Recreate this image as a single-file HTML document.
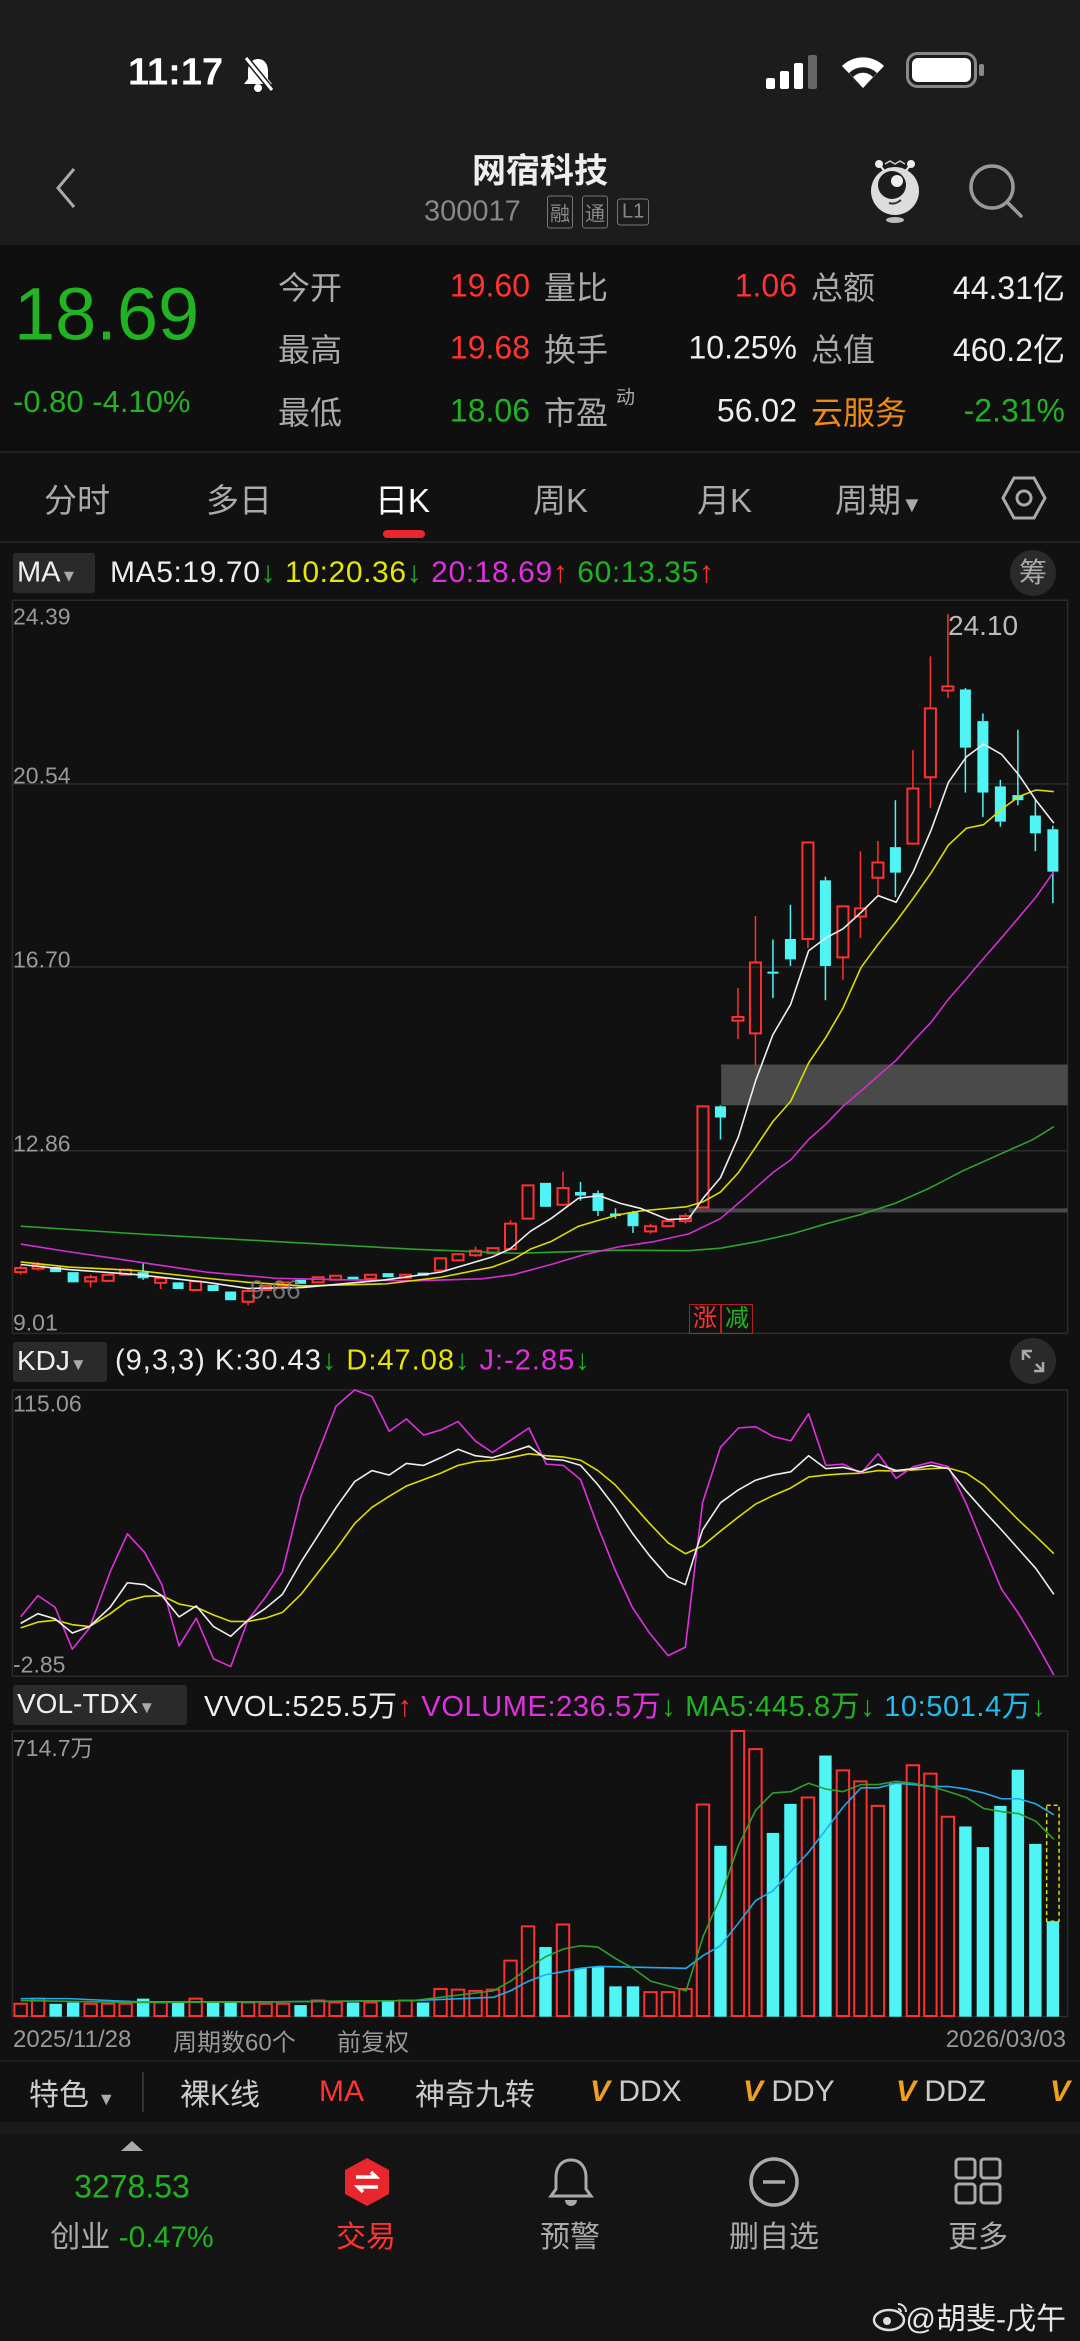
<!DOCTYPE html>
<html><head><meta charset="utf-8">
<style>
*{margin:0;padding:0;box-sizing:border-box}
body{width:1080px;height:2341px;background:#111;position:relative;overflow:hidden;font-family:"Liberation Sans","Noto Sans CJK SC",sans-serif;color:#ddd}
.a{position:absolute;white-space:nowrap}
.m{transform:translateY(-50%)}
.r{color:#ff3333}.g{color:#22b322}.y{color:#e6e600}.p{color:#e030e0}.gr{color:#aaa}.w{color:#eee}.c{color:#22bbee}
svg{position:absolute}
</style></head><body>
<div class="a" style="left:0;top:0;width:1080px;height:245px;background:#1c1c1c"></div>
<div class="a" style="left:0;top:245px;width:1080px;height:207px;background:#0f0f0f"></div>
<div class="a" style="left:0;top:451px;width:1080px;height:2px;background:#222"></div>
<div class="a" style="left:0;top:541px;width:1080px;height:2px;background:#222"></div>
<!-- status -->
<div class="a m" style="left:128px;top:73px;font-size:38px;font-weight:bold;color:#fff">11:17</div>
<svg style="left:240px;top:55px" width="36" height="38" viewBox="0 0 36 38"><path d="M18 4c-7 0-10 6-10 12v8l-4 5h28l-4-5v-8c0-6-3-12-10-12z" fill="#fff"/><circle cx="18" cy="33" r="4" fill="#fff"/><line x1="6" y1="3" x2="32" y2="35" stroke="#1c1c1c" stroke-width="6"/><line x1="6" y1="3" x2="32" y2="35" stroke="#fff" stroke-width="3"/></svg>
<svg style="left:766px;top:55px" width="56" height="34"><rect x="0" y="23" width="9" height="11" rx="2" fill="#fff"/><rect x="14" y="16" width="9" height="18" rx="2" fill="#fff"/><rect x="28" y="8" width="9" height="26" rx="2" fill="#fff"/><rect x="42" y="0" width="9" height="34" rx="2" fill="#666"/></svg>
<svg style="left:838px;top:52px" width="50" height="38" viewBox="0 0 50 38"><path d="M25 36L4 14a30 30 0 0 1 42 0z" fill="#fff"/><path d="M25 36L11 21a20 20 0 0 1 28 0z" fill="#1c1c1c"/><path d="M25 36L15 25a14 14 0 0 1 20 0z" fill="#fff"/></svg>
<svg style="left:906px;top:52px" width="80" height="36"><rect x="1.5" y="1.5" width="68" height="33" rx="10" fill="none" stroke="#888" stroke-width="3"/><rect x="6" y="6" width="59" height="24" rx="6" fill="#fff"/><rect x="73" y="12" width="5" height="12" rx="2" fill="#888"/></svg>
<!-- header -->
<svg style="left:50px;top:165px" width="30" height="46"><path d="M24 4L8 23l16 19" fill="none" stroke="#aaa" stroke-width="3"/></svg>
<div class="a m" style="left:0;width:1080px;text-align:center;top:168px;font-size:34px;font-weight:bold;color:#eee">网宿科技</div>
<div class="a m" style="left:424px;top:212px;font-size:29px;color:#888">300017</div>
<div class="a m" style="left:547px;top:212px;font-size:20px;color:#888;border:1.5px solid #777;padding:1px 2px;border-radius:3px">融</div>
<div class="a m" style="left:582px;top:212px;font-size:20px;color:#888;border:1.5px solid #777;padding:1px 2px;border-radius:3px">通</div>
<div class="a m" style="left:617px;top:212px;font-size:20px;color:#888;border:1.5px solid #777;padding:1px 4px;border-radius:3px">L1</div>
<svg style="left:865px;top:158px" width="60" height="66" viewBox="0 0 60 66"><path d="M20 6l5 -3 5 3 5-3 5 3" fill="none" stroke="#ccc" stroke-width="1.5"/><circle cx="14" cy="6" r="4" fill="#eee"/><circle cx="46" cy="6" r="4" fill="#eee"/><line x1="14" y1="6" x2="20" y2="14" stroke="#eee" stroke-width="2"/><line x1="46" y1="6" x2="40" y2="14" stroke="#eee" stroke-width="2"/><circle cx="30" cy="33" r="24" fill="#ddd"/><circle cx="27" cy="27" r="14" fill="#1c1c1c"/><circle cx="32" cy="23" r="6" fill="#eee"/><path d="M24 45q6 2 12-3" fill="none" stroke="#333" stroke-width="2"/><ellipse cx="30" cy="62" rx="9" ry="3" fill="#bbb"/></svg>
<svg style="left:965px;top:160px" width="64" height="60"><circle cx="27" cy="27" r="21" fill="none" stroke="#999" stroke-width="3.5"/><line x1="42" y1="42" x2="56" y2="56" stroke="#999" stroke-width="3.5" stroke-linecap="round"/></svg>
<!-- quote -->
<div class="a m g" style="left:14px;top:314px;font-size:74px">18.69</div>
<div class="a m g" style="left:13px;top:402px;font-size:31px">-0.80 -4.10%</div>
<div class="a m gr" style="left:278px;top:286px;font-size:32px">今开</div>
<div class="a m gr" style="left:278px;top:348px;font-size:32px">最高</div>
<div class="a m gr" style="left:278px;top:411px;font-size:32px">最低</div>
<div class="a m r" style="right:550px;top:286px;font-size:32px">19.60</div>
<div class="a m r" style="right:550px;top:348px;font-size:32px">19.68</div>
<div class="a m g" style="right:550px;top:411px;font-size:32px">18.06</div>
<div class="a m gr" style="left:544px;top:286px;font-size:32px">量比</div>
<div class="a m gr" style="left:544px;top:348px;font-size:32px">换手</div>
<div class="a m gr" style="left:544px;top:411px;font-size:32px">市盈</div>
<div class="a m gr" style="left:616px;top:396px;font-size:19px">动</div>
<div class="a m r" style="right:283px;top:286px;font-size:32px">1.06</div>
<div class="a m w" style="right:283px;top:348px;font-size:32px">10.25%</div>
<div class="a m w" style="right:283px;top:411px;font-size:32px">56.02</div>
<div class="a m gr" style="left:811px;top:286px;font-size:32px">总额</div>
<div class="a m gr" style="left:811px;top:348px;font-size:32px">总值</div>
<div class="a m" style="left:811px;top:411px;font-size:32px;color:#f08a10">云服务</div>
<div class="a m w" style="right:15px;top:286px;font-size:32px">44.31亿</div>
<div class="a m w" style="right:15px;top:348px;font-size:32px">460.2亿</div>
<div class="a m g" style="right:15px;top:411px;font-size:32px">-2.31%</div>
<!-- tabs -->
<div class="a m gr" style="left:44px;top:498px;font-size:33px">分时</div>
<div class="a m gr" style="left:206px;top:498px;font-size:33px">多日</div>
<div class="a m" style="left:375px;top:498px;font-size:33px;color:#fff">日K</div>
<div class="a m gr" style="left:533px;top:498px;font-size:33px">周K</div>
<div class="a m gr" style="left:697px;top:498px;font-size:33px">月K</div>
<div class="a m gr" style="left:835px;top:498px;font-size:33px">周期<span style="font-size:22px">▼</span></div>
<svg style="left:1000px;top:474px" width="48" height="48"><path d="M14 4h20l11 20-11 20H14L3 24z" fill="none" stroke="#aaa" stroke-width="3"/><circle cx="24" cy="24" r="7" fill="none" stroke="#aaa" stroke-width="3"/></svg>
<div class="a" style="left:383px;top:530px;width:42px;height:8px;border-radius:4px;background:#e8262e"></div>
<!-- MA legend -->
<div class="a" style="left:13px;top:553px;width:82px;height:40px;background:#2a2a2a;border-radius:3px"></div>
<div class="a m w" style="left:17px;top:573px;font-size:29px">MA<span style="font-size:17px;color:#aaa">▼</span></div>
<div class="a m" style="left:110px;top:573px;font-size:30px;letter-spacing:0.6px"><span class="w">MA5:19.70</span><span class="g">↓</span> <span class="y">10:20.36</span><span class="g">↓</span> <span class="p">20:18.69</span><span class="r">↑</span> <span class="g">60:13.35</span><span class="r">↑</span></div>
<div class="a" style="left:1010px;top:550px;width:46px;height:46px;border-radius:50%;background:#2a2a2a;color:#aaa;font-size:28px;text-align:center;line-height:46px">筹</div>
<!-- main chart -->
<svg id="main" style="left:0;top:540px" width="1080" height="800" viewBox="0 0 1568 1568" preserveAspectRatio="none"></svg>
<div class="a m" style="left:13px;top:617px;font-size:23px;color:#999">24.39</div>
<div class="a m" style="left:13px;top:776px;font-size:23px;color:#999">20.54</div>
<div class="a m" style="left:13px;top:960px;font-size:23px;color:#999">16.70</div>
<div class="a m" style="left:13px;top:1144px;font-size:23px;color:#999">12.86</div>
<div class="a m" style="left:13px;top:1323px;font-size:23px;color:#999">9.01</div>
<div class="a m" style="left:948px;top:626px;font-size:28px;color:#bbb">24.10</div>
<div class="a m" style="left:250px;top:1290px;font-size:26px;color:#888;opacity:.8">9.66</div>
<div class="a" style="left:689px;top:1304px;width:32px;height:30px;border:1px solid #b02020;color:#ff3333;font-size:24px;text-align:center;line-height:28px">涨</div>
<div class="a" style="left:721px;top:1304px;width:32px;height:30px;border:1px solid #b02020;color:#22b322;font-size:24px;text-align:center;line-height:28px">减</div>
<!-- KDJ -->
<div class="a" style="left:13px;top:1342px;width:94px;height:40px;background:#2a2a2a;border-radius:3px"></div>
<div class="a m w" style="left:17px;top:1361px;font-size:28px">KDJ<span style="font-size:17px;color:#aaa">▼</span></div>
<div class="a m" style="left:115px;top:1361px;font-size:29px;letter-spacing:1px"><span class="w">(9,3,3) K:30.43</span><span class="g">↓</span> <span class="y">D:47.08</span><span class="g">↓</span> <span class="p">J:-2.85</span><span class="g">↓</span></div>
<div class="a" style="left:1010px;top:1338px;width:46px;height:46px;border-radius:50%;background:#2a2a2a"></div>
<svg style="left:1020px;top:1348px" width="26" height="26"><path d="M3 12V3h9M3 3l7 7M23 14v9h-9M23 23l-7-7" fill="none" stroke="#aaa" stroke-width="2.5"/></svg>
<svg id="kv" style="left:0;top:1330px" width="1080" height="1011" viewBox="0 0 1568 1568" preserveAspectRatio="none"></svg>
<div class="a m" style="left:13px;top:1404px;font-size:23px;color:#999">115.06</div>
<div class="a m" style="left:13px;top:1665px;font-size:23px;color:#999">-2.85</div>
<!-- VOL -->
<div class="a" style="left:13px;top:1685px;width:174px;height:40px;background:#2a2a2a;border-radius:3px"></div>
<div class="a m w" style="left:17px;top:1704px;font-size:28px">VOL-TDX<span style="font-size:17px;color:#aaa">▼</span></div>
<div class="a m" style="left:204px;top:1704px;font-size:29px;letter-spacing:0.6px"><span class="w">VVOL:525.5万</span><span class="r">↑</span> <span class="p">VOLUME:236.5万</span><span class="g">↓</span> <span class="g">MA5:445.8万</span><span class="g">↓</span> <span class="c">10:501.4万</span><span class="g">↓</span></div>
<div class="a m" style="left:13px;top:1746px;font-size:23px;color:#999">714.7万</div>
<div class="a m" style="left:13px;top:2040px;font-size:24px;color:#999">2025/11/28</div>
<div class="a m" style="left:173px;top:2040px;font-size:24px;color:#999">周期数60个</div>
<div class="a m" style="left:337px;top:2040px;font-size:24px;color:#999">前复权</div>
<div class="a m" style="right:14px;top:2040px;font-size:24px;color:#999">2026/03/03</div>
<!-- feature bar -->
<div class="a" style="left:0;top:2060px;width:1080px;height:2px;background:#1d1d1d"></div>
<div class="a m" style="left:29px;top:2092px;font-size:30px;color:#ccc">特色 <span style="font-size:18px;color:#aaa">▼</span></div>
<div class="a" style="left:142px;top:2072px;width:2px;height:40px;background:#333"></div>
<div class="a m" style="left:180px;top:2092px;font-size:30px;color:#ccc">裸K线</div>
<div class="a m r" style="left:319px;top:2092px;font-size:30px">MA</div>
<div class="a m" style="left:415px;top:2092px;font-size:30px;color:#ccc">神奇九转</div>
<div class="a m" style="left:590px;top:2092px;font-size:30px;color:#ccc"><b style="color:#f0a020;font-style:italic">V</b> DDX</div>
<div class="a m" style="left:743px;top:2092px;font-size:30px;color:#ccc"><b style="color:#f0a020;font-style:italic">V</b> DDY</div>
<div class="a m" style="left:896px;top:2092px;font-size:30px;color:#ccc"><b style="color:#f0a020;font-style:italic">V</b> DDZ</div>
<div class="a m" style="left:1050px;top:2092px;font-size:30px"><b style="color:#f0a020;font-style:italic">V</b></div>
<div class="a" style="left:0;top:2122px;width:1080px;height:12px;background:#1a1a1a"></div>
<div class="a" style="left:0;top:2134px;width:1080px;height:207px;background:#141414"></div>
<!-- nav -->
<div class="a" style="left:121px;top:2141px;width:0;height:0;border-left:11px solid transparent;border-right:11px solid transparent;border-bottom:10px solid #aaa"></div>
<div class="a m g" style="left:0;width:264px;text-align:center;top:2187px;font-size:32px">3278.53</div>
<div class="a m" style="left:0;width:264px;text-align:center;top:2234px;font-size:30px;color:#aaa">创业 <span class="g">-0.47%</span></div>
<svg style="left:342px;top:2156px" width="50" height="52"><path d="M25 2l22 12v24L25 50 3 38V14z" fill="#e8262e"/><path d="M14 21h20l-5-5M36 31H16l5 5" fill="none" stroke="#fff" stroke-width="3.5"/></svg>
<div class="a m r" style="left:268px;width:196px;text-align:center;top:2234px;font-size:30px">交易</div>
<svg style="left:548px;top:2156px" width="46" height="52"><path d="M23 4c-10 0-15 8-15 17v12l-5 7h40l-5-7V21c0-9-5-17-15-17z" fill="none" stroke="#aaa" stroke-width="3"/><path d="M17 44a6 6 0 0 0 12 0" fill="#aaa"/></svg>
<div class="a m gr" style="left:472px;width:196px;text-align:center;top:2234px;font-size:30px">预警</div>
<svg style="left:748px;top:2156px" width="52" height="52"><circle cx="26" cy="26" r="23" fill="none" stroke="#aaa" stroke-width="3.5"/><line x1="15" y1="26" x2="37" y2="26" stroke="#aaa" stroke-width="3.5"/></svg>
<div class="a m gr" style="left:676px;width:196px;text-align:center;top:2234px;font-size:30px">删自选</div>
<svg style="left:953px;top:2156px" width="50" height="50"><rect x="3" y="3" width="19" height="19" rx="3" fill="none" stroke="#aaa" stroke-width="3"/><rect x="28" y="3" width="19" height="19" rx="3" fill="none" stroke="#aaa" stroke-width="3"/><rect x="3" y="28" width="19" height="19" rx="3" fill="none" stroke="#aaa" stroke-width="3"/><rect x="28" y="28" width="19" height="19" rx="3" fill="none" stroke="#aaa" stroke-width="3"/></svg>
<div class="a m gr" style="left:880px;width:196px;text-align:center;top:2234px;font-size:30px">更多</div>
<svg style="left:872px;top:2300px" width="38" height="32"><ellipse cx="17" cy="20" rx="15" ry="10" fill="none" stroke="#ddd" stroke-width="2.5"/><circle cx="15" cy="21" r="4" fill="#ddd"/><path d="M26 4a8 8 0 0 1 8 8M26 9a3 3 0 0 1 3 3" fill="none" stroke="#ddd" stroke-width="2"/></svg>
<div class="a m" style="right:14px;top:2316px;font-size:30px;color:#e8e8e8">@胡斐-戊午</div>
<script>
var NS="http://www.w3.org/2000/svg";
function el(s,t,a){var e=document.createElementNS(NS,t);for(var k in a)e.setAttribute(k,a[k]);e.setAttribute("vector-effect","non-scaling-stroke");s.appendChild(e);return e}
var M=document.getElementById("main"),K=document.getElementById("kv");
[118,478,837,1197,1555].forEach(function(y){el(M,"line",{x1:18,x2:1550,y1:y,y2:y,stroke:"#2c2c2c","stroke-width":1.5})});
el(M,"line",{x1:18,x2:18,y1:118,y2:1555,stroke:"#2c2c2c","stroke-width":1.5});
el(M,"line",{x1:1550,x2:1550,y1:118,y2:1555,stroke:"#2c2c2c","stroke-width":1.5});
el(M,"rect",{x:1047,y:1028,width:503,height:80,fill:"#4a4a4a"});
el(M,"rect",{x:1000,y:1310,width:550,height:8,fill:"#4a4a4a"});
var C=[["r",1427,1435,1422,1440],["r",1420,1428,1415,1432],["c",1425,1435],["c",1435,1455],["r",1445,1453,1440,1465],["r",1440,1452],["r",1430,1440],["c",1435,1447,1418,1450],["r",1447,1456,1445,1468],["c",1455,1468],["r",1453,1470],["c",1460,1472],["c",1473,1490],["r",1472,1493,1465,1500],["r",1462,1470],["r",1455,1462],["c",1450,1458],["r",1445,1455],["r",1442,1450],["c",1444,1450],["r",1440,1448],["c",1437,1445],["r",1440,1446],["c",1436,1442],["r",1408,1432],["r",1400,1412],["r",1393,1402,1385,1405],["r",1388,1398],["r",1340,1390,1333,1392],["r",1265,1330],["c",1260,1307],["r",1270,1303,1238,1305],["c",1278,1285,1258,1295],["c",1280,1315,1275,1325],["c",1320,1325,1310,1330],["c",1318,1345,1315,1358],["r",1345,1355,1340,1360],["r",1335,1345],["r",1325,1335,1320,1340],["r",1110,1308],["c",1110,1132,1108,1175],["r",935,942,878,978],["r",828,967,737,1030],["c",846,850,783,898],["c",782,822,715,835],["r",593,782,593,800],["c",667,835,660,902],["r",718,818,718,862],["r",722,738,610,780],["r",632,662,590,695],["c",602,652,510,700],["r",487,595,412,597],["r",330,465,228,525],["r",287,295,145,310],["c",293,407,290,495],["c",355,495,340,543],["c",483,552,470,562],["c",500,510,372,520],["c",540,575,508,610],["c",567,650,560,712]];
var RED="#ff3030",CY="#4ff5f5";
C.forEach(function(d,i){var x=30+25.4*i,col=d[0]=="r"?RED:CY;var t=d[1],b=d[2],h=d[3]||t,l=d[4]||b;
el(M,"line",{x1:x,x2:x,y1:h,y2:t,stroke:col,"stroke-width":1.5});el(M,"line",{x1:x,x2:x,y1:b,y2:l,stroke:col,"stroke-width":1.5});
if(d[0]=="r")el(M,"rect",{x:x-8,y:t,width:16,height:Math.max(b-t,3),fill:"none",stroke:col,"stroke-width":2});else el(M,"rect",{x:x-8,y:t,width:16,height:Math.max(b-t,4),fill:col});});
function pl(s,pts,col,w){el(s,"polyline",{points:pts,fill:"none",stroke:col,"stroke-width":w||1.6,"stroke-linejoin":"round"})}
pl(M,"30,1345 200,1360 400,1375 600,1390 750,1398 900,1392 1000,1393 1046,1388 1100,1375 1150,1360 1200,1340 1250,1322 1300,1300 1350,1270 1400,1235 1450,1205 1500,1175 1530,1150","#2ea02e");
pl(M,"30,1380 100,1395 200,1415 300,1435 400,1447 500,1450 600,1452 700,1448 745,1440 800,1420 850,1400 900,1385 950,1375 1000,1360 1046,1330 1072,1300 1097,1270 1122,1240 1148,1215 1174,1175 1199,1145 1224,1110 1250,1080 1275,1050 1301,1020 1326,982 1352,945 1377,900 1403,860 1428,820 1454,780 1479,740 1504,700 1530,650","#d030d0");
pl(M,"30,1415 100,1425 200,1432 300,1447 360,1455 440,1462 560,1458 640,1445 715,1425 745,1410 770,1390 800,1375 840,1345 870,1333 900,1322 930,1315 970,1310 996,1307 1021,1297 1046,1278 1072,1240 1097,1190 1122,1140 1148,1100 1174,1025 1199,975 1224,917 1250,838 1275,792 1301,748 1326,702 1352,652 1377,598 1403,565 1428,558 1454,528 1479,503 1504,490 1530,493","#dddd00");
pl(M,"30,1420 100,1430 200,1440 300,1455 360,1467 440,1465 560,1450 640,1435 715,1405 740,1390 770,1355 800,1330 840,1290 870,1285 900,1300 930,1310 970,1332 1000,1330 1021,1290 1046,1250 1072,1170 1097,1060 1122,970 1148,910 1174,805 1199,780 1224,762 1250,730 1275,697 1301,710 1326,650 1352,568 1377,475 1403,425 1428,400 1454,420 1479,460 1504,510 1530,555","#eeeeee");
[93,537,622,1065].forEach(function(y){el(K,"line",{x1:18,x2:1550,y1:y,y2:y,stroke:"#2c2c2c","stroke-width":1.5})});
[[18,93,537],[1550,93,537],[18,622,1065],[1550,622,1065]].forEach(function(a){el(K,"line",{x1:a[0],x2:a[0],y1:a[1],y2:a[2],stroke:"#2c2c2c","stroke-width":1.5})});
pl(K,"30,462 55,453 80,450 105,457 130,460 160,440 185,420 210,413 235,412 260,425 285,430 310,442 335,452 360,452 385,447 410,438 437,410 488,340 515,300 540,275 565,258 590,242 615,232 640,222 665,210 690,204 715,202 740,198 768,192 793,195 818,197 843,202 868,218 893,240 918,270 943,300 970,330 995,347 1020,335 1046,312 1072,290 1097,270 1122,257 1148,245 1174,228 1199,225 1224,223 1250,222 1275,218 1301,219 1326,217 1352,215 1377,214 1403,222 1428,240 1454,268 1479,295 1504,320 1530,347","#dddd00");
pl(K,"30,445 55,412 80,430 105,495 130,462 160,375 185,316 210,345 235,395 260,490 285,447 310,510 335,522 360,450 385,415 410,375 437,258 488,118 515,93 540,103 565,157 590,138 615,163 640,155 665,142 690,172 715,190 740,172 768,152 793,208 818,210 843,232 868,305 893,372 918,430 943,470 970,505 995,492 1020,268 1046,182 1072,152 1097,150 1122,165 1148,172 1174,130 1199,210 1224,208 1250,222 1275,192 1301,230 1326,212 1352,205 1377,212 1403,270 1428,335 1454,402 1479,440 1504,485 1530,535","#e030e0");
pl(K,"30,455 55,440 80,448 105,470 130,460 160,430 185,392 210,395 235,412 260,445 285,428 310,460 335,475 360,450 385,432 410,410 437,360 488,275 515,235 540,218 565,225 590,207 615,210 640,198 665,185 690,195 715,198 740,190 768,180 793,200 818,202 843,210 868,240 893,275 918,315 943,350 970,383 995,395 1020,310 1046,268 1072,248 1097,233 1122,225 1148,220 1174,195 1199,215 1224,213 1250,220 1275,208 1301,218 1326,215 1352,210 1377,215 1403,250 1428,280 1454,310 1479,340 1504,370 1530,410","#eeeeee");
var V=[1045,1037,1045,1043,1045,1045,1045,1037,1043,1043,1037,1043,1043,1043,1045,1045,1047,1040,1043,1043,1043,1040,1040,1043,1022,1023,1025,1023,978,925,957,922,990,987,1018,1018,1027,1027,1022,736,800,622,650,780,735,725,660,683,700,738,703,675,688,755,770,802,738,682,797,917];
V.forEach(function(t,i){var x=30+25.4*i,r=C[i][0]=="r";if(i==59){el(K,"rect",{x:x-9,y:737,width:18,height:180,fill:"none",stroke:"#dddd00","stroke-width":1.5,"stroke-dasharray":"4,3"});}
if(r)el(K,"rect",{x:x-9,y:t,width:18,height:1064-t,fill:"none",stroke:RED,"stroke-width":2});else el(K,"rect",{x:x-9,y:t,width:18,height:1065-t,fill:CY});});
pl(K,"30,1037 100,1037 200,1042 400,1042 600,1040 716,1035 741,1025 767,1010 792,1000 818,995 843,990 870,987 996,990 1021,970 1046,955 1072,920 1097,885 1122,870 1148,840 1174,810 1199,775 1224,740 1250,710 1275,710 1301,703 1326,705 1352,708 1377,708 1403,712 1428,718 1454,727 1479,727 1504,735 1530,752","#22aaee");
pl(K,"30,1040 200,1043 400,1042 600,1040 716,1025 741,1010 767,990 792,972 818,960 843,955 868,957 894,975 919,990 945,1010 970,1017 996,1025 1021,940 1046,880 1072,800 1097,745 1122,718 1148,716 1174,703 1199,712 1224,716 1250,705 1275,705 1301,700 1326,703 1352,708 1377,716 1403,725 1428,742 1454,747 1479,750 1504,762 1530,790","#2ea02e");
</script>
</body></html>
